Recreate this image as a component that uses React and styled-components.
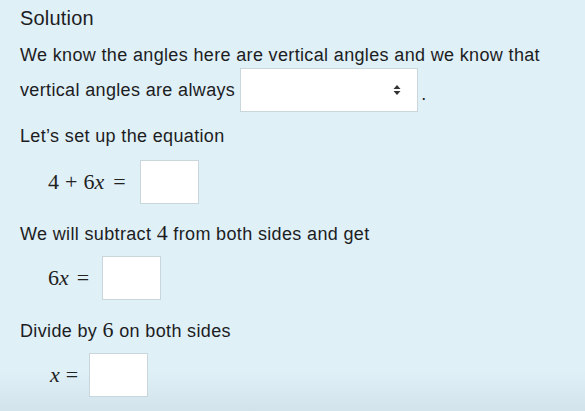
import React from 'react';
import styled, { createGlobalStyle } from 'styled-components';

const GlobalStyle = createGlobalStyle`
  html, body {
    margin: 0;
    padding: 0;
  }
  body {
    background: #dff0f7;
    font-family: "Liberation Sans", Arial, sans-serif;
    color: #1d1d1f;
  }
`;

const Page = styled.div`
  width: 585px;
  height: 411px;
  box-sizing: border-box;
  padding: 4px 20px 0 20px;
  overflow: hidden;
  background: linear-gradient(to bottom, #dff0f7 0%, #dff0f7 90%, #d2e3eb 100%);
`;

const Title = styled.div`
  font-size: 20px;
  line-height: 28px;
  letter-spacing: 0.2px;
`;

const Para = styled.div`
  font-size: 18px;
  letter-spacing: 0.35px;
  line-height: 22px;
  margin-top: ${(p) => p.mt || 0}px;
  display: flex;
  align-items: center;
  gap: 5px;
`;

const Select = styled.div`
  width: 178px;
  height: 44px;
  box-sizing: border-box;
  background: #fff;
  border: 1px solid #c9d6dc;
  display: flex;
  align-items: center;
  justify-content: flex-end;
  padding-right: 16px;
`;

const Dot = styled.span`
  margin-left: -2px;
  padding-top: 8px;
`;

const MathRow = styled.div`
  display: flex;
  align-items: center;
  padding-left: ${(p) => p.indent}px;
  margin-top: ${(p) => p.mt}px;
  gap: 6px;
`;

const MathText = styled.span`
  font-family: "Liberation Serif", "Times New Roman", serif;
  font-size: 22px;
  color: #222;
  white-space: pre;
`;

const Op = styled.span`
  margin: 0 ${(p) => p.sp}px;
`;

const Var = styled.i`
  font-style: italic;
  margin-right: 1px;
`;

const Answer = styled.div`
  width: 59px;
  height: 44px;
  box-sizing: border-box;
  background: #fff;
  border: 1px solid #c9d6dc;
`;

const Num = styled.span`
  font-family: "Liberation Serif", "Times New Roman", serif;
  font-size: 22px;
`;

function UpDown() {
  return (
    <svg width="8" height="10" viewBox="0 0 8 10">
      <path d="M4 0 L7.5 4 L0.5 4 Z" fill="#333" />
      <path d="M4 10 L7.5 6 L0.5 6 Z" fill="#333" />
    </svg>
  );
}

export default function App() {
  return (
    <>
      <GlobalStyle />
      <Page>
        <Title>Solution</Title>
        <Para mt={12}>We know the angles here are vertical angles and we know that</Para>
        <Para mt={2}>
          vertical angles are always
          <Select>
            <UpDown />
          </Select>
          <Dot>.</Dot>
        </Para>
        <Para mt={13}>Let’s set up the equation</Para>
        <MathRow indent={28} mt={13}>
          <MathText>4<Op sp={6}>+</Op>6<Var>x</Var><Op sp={8}>=</Op></MathText>
          <Answer />
        </MathRow>
        <Para mt={18}>
          <span>We will subtract <Num>4</Num> from both sides and get</span>
        </Para>
        <MathRow indent={28} mt={11}>
          <MathText>6<Var>x</Var><Op sp={7}>=</Op></MathText>
          <Answer />
        </MathRow>
        <Para mt={19}>
          <span>Divide by <Num>6</Num> on both sides</span>
        </Para>
        <MathRow indent={30} mt={11}>
          <MathText><Var>x</Var><Op sp={5}>=</Op></MathText>
          <Answer />
        </MathRow>
      </Page>
    </>
  );
}
